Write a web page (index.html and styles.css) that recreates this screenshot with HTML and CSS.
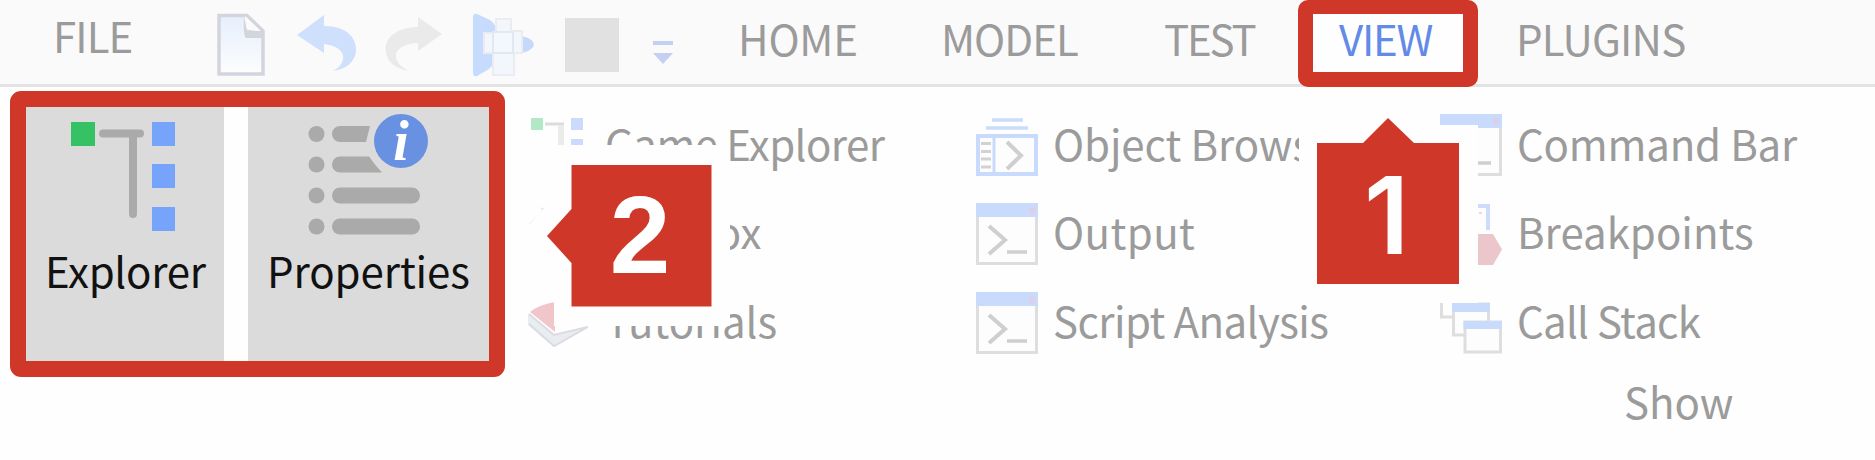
FILE: index.html
```html
<!DOCTYPE html>
<html lang="en">
<head>
<meta charset="utf-8">
<title>Ribbon – View</title>
<link rel="stylesheet" href="styles.css">
</head>
<body>
<svg class="defs" width="0" height="0">
  <defs>
    <linearGradient id="paper" x1="0" y1="0" x2="0" y2="1"><stop offset="0" stop-color="#e6effc"/><stop offset="1" stop-color="#fdfdfe"/></linearGradient>
    <symbol id="console" viewBox="0 0 62 62">
      <rect x="1.5" y="1.5" width="59" height="59" fill="#fdfdfd" stroke="#dedede" stroke-width="3"/>
      <rect width="62" height="14" fill="#c9dbfd"/>
      <rect x="53" y="4" width="6" height="7" fill="#dccfe8"/>
      <path d="M13 23 29 37 13 51" fill="none" stroke="#cfcfcf" stroke-width="4"/>
      <path d="M31 49H51" stroke="#cfcfcf" stroke-width="3.5"/>
    </symbol>
  </defs>
</svg>
<header class="tabs">
  <span class="tab file">FILE</span>
  <svg class="tool" viewBox="0 0 62 84">
    <path d="M4 15.500H32L48 31V74H4Z" fill="url(#paper)" stroke="#d3d4de" stroke-width="3.500"/>
    <path d="M30 16V32H47Z" fill="#fafafa"/><path d="M29 16 32 30 48 31V38H31Q28 36 29 16" fill="#d3d5da"/><path d="M31 18 45 31Q34 31 31 27Z" fill="#fafafa"/>
  </svg>
  <svg class="tool" viewBox="0 0 62 84"><path d="M2 35 29 15V26C52 26 62 38 61 52C59 63 51 69 38 71C52 64 54 47 29 44V53Z" fill="#cfe0fd"/></svg>
  <svg class="tool" viewBox="0 0 62 84"><path d="M58 34 34 17V27C10 28 0 39 2 52C3 62 12 69 25 71C5 61 8 44 34 43V51Z" fill="#eaeaea"/></svg>
  <svg class="tool" viewBox="0 0 62 84">
    <path d="M1 16Q2 13 5 14L18 20Q25 25 25 35V55Q21 66 17 69L5 76Q1 77 1 73Z" fill="#c6dbfd"/>
    <path d="M50 36Q62 39 62 45Q61 50 50 53Z" fill="#c6d9fb"/>
    <path d="M24 19H39V31H50V53H42V75H21V53H12V33H24Z" fill="#f3f6fa" stroke="#e9edf2" stroke-width="2"/>
    <path d="M21 32H41V53H21Z" fill="#f4f7fb" stroke="#e0e8f2" stroke-width="2"/>
  </svg>
  <svg class="tool" viewBox="0 0 62 84"><rect x="1" y="18" width="54" height="54" fill="#e1e1e1"/></svg>
  <svg class="tool" viewBox="0 0 62 84"><path d="M2 41H22V45H2ZM2 53H22L12 64Z" fill="#c3d0f4"/></svg>
  <span class="tab t-home">HOME</span>
  <span class="tab t-model">MODEL</span>
  <span class="tab t-test">TEST</span>
  <span class="tab active">VIEW</span>
  <span class="tab t-plugins">PLUGINS</span>
</header>
<main class="ribbon">
  <section class="large">
    <div class="big explorer">
      <svg class="bigicon" viewBox="0 0 198 140">
        <path d="M77 27.500H114M107 27.500V108" fill="none" stroke="#aaa" stroke-width="8" stroke-linecap="round"/>
        <rect x="45" y="16" width="24" height="24" fill="#34c264"/>
        <path d="M126 16h23v24h-23zM126 58h23v24h-23zM126 101h23v24h-23z" fill="#76a4fb"/>
      </svg>
      <span class="biglabel l-explorer">Explorer</span>
    </div>
    <div class="big properties">
      <svg class="bigicon" viewBox="0 0 241 140">
        <g fill="#aaa">
          <circle cx="68.500" cy="28" r="8"/><circle cx="68.500" cy="58.500" r="8"/><circle cx="68.500" cy="89.500" r="8"/><circle cx="68.500" cy="120.500" r="8"/>
          <path d="M92 20H122L118 36H92A8 8 0 0 1 92 20M92 50.500H121Q126 58 134 66.500H92A8 8 0 0 1 92 50.500"/>
          <rect x="84" y="81.500" width="88" height="16" rx="8"/><rect x="84" y="112.500" width="88" height="16" rx="8"/>
        </g>
        <circle cx="153" cy="35" r="27" fill="#6991e2"/>
        <text class="info" x="153" y="54" text-anchor="middle">i</text>
      </svg>
      <span class="biglabel l-properties">Properties</span>
    </div>
  </section>
  <section class="list c1">
    <div class="item">
      <svg class="icon" viewBox="0 0 62 62"><path d="M17 10H36" stroke="#dcdcdc" stroke-width="3"/><path d="M33 11V60" stroke="#ebebeb" stroke-width="6"/><rect x="3" y="4" width="12" height="12" fill="#b2e8c6"/><path d="M43 4h12v12h-12zM43 25h12v12h-12z" fill="#cadbfd"/></svg>
      <span class="label l-game">Game Explorer</span>
    </div>
    <div class="item">
      <svg class="icon" viewBox="0 0 62 62"><path d="M1 22 17 7M4 21 16 9M13 5 18 8" fill="none" stroke="#e3e8ef" stroke-width="2"/></svg>
      <span class="label l-toolbox">Toolbox</span>
    </div>
    <div class="item">
      <svg class="icon" viewBox="0 0 62 62"><path d="M0 22 26 42 60 34V36L26 55 0 33Z" fill="#e8edf2"/><path d="M1 22 26 43 60 35M1 32 26 54 58 36" fill="none" stroke="#dddbe1" stroke-width="2"/><path d="M2 20Q10 13 27 10V40Z" fill="#f1c6ca"/></svg>
      <span class="label l-tutorials">Tutorials</span>
    </div>
  </section>
  <section class="list c2">
    <div class="item">
      <svg class="icon" viewBox="0 0 62 62"><path d="M16 6H47M10 14H52" stroke="#cadcfd" stroke-width="3.500"/><rect x="2" y="22" width="58" height="38" fill="#fdfdfd" stroke="#c9dbfd" stroke-width="4"/><path d="M18 22V60" stroke="#c9dbfd" stroke-width="3"/><path d="M5 29.500H15M5 37.500H15M5 45H15M5 53H15" stroke="#d2d2d2" stroke-width="3"/><path d="M31 28 45 41.500 31 55" fill="none" stroke="#cfcfcf" stroke-width="4"/></svg>
      <span class="label l-object">Object Browser</span>
    </div>
    <div class="item"><svg class="icon"><use href="#console"/></svg><span class="label l-output">Output</span></div>
    <div class="item"><svg class="icon"><use href="#console"/></svg><span class="label l-script">Script Analysis</span></div>
  </section>
  <section class="list c3">
    <div class="item"><svg class="icon"><use href="#console"/></svg><span class="label l-command">Command Bar</span></div>
    <div class="item">
      <svg class="icon" viewBox="0 0 62 62"><path d="M12 3H48V27" fill="none" stroke="#cddcfd" stroke-width="4"/><path d="M39 10H42" stroke="#ecd8de" stroke-width="2"/><path d="M26 31H53L62 46.500 53 62H26Z" fill="#ebc6ca"/></svg>
      <span class="label l-break">Breakpoints</span>
    </div>
    <div class="item">
      <svg class="icon" viewBox="0 0 62 62"><path d="M1.500 5V25H13M36 5V14" fill="none" stroke="#dedede" stroke-width="3"/><rect x="13.500" y="12" width="35" height="31" fill="#fdfdfd" stroke="#dedede" stroke-width="3"/><path d="M12 11H50V20H12Z" fill="#c9dbfd"/><rect x="25" y="30" width="35.500" height="30" fill="#fdfdfd" stroke="#dedede" stroke-width="3"/><path d="M23.500 29H62V37H23.500Z" fill="#c9dbfd"/></svg>
      <span class="label l-call">Call Stack</span>
    </div>
  </section>
  <span class="label group">Show</span>
</main>
<div class="frame frame-large"></div>
<div class="frame frame-tab"></div>
<svg class="callout callout-two" viewBox="0 0 220 190">
  <path d="M44 5H220V186H44V134L8 96 44 58Z" fill="#fefefe"/>
  <path d="M61.500 25H201.500V166.500H61.500V123L37 96 61.500 69Z" fill="#cf3829"/>
  <text class="digit" x="130" y="133" text-anchor="middle">2</text>
</svg>
<svg class="callout callout-one" viewBox="0 0 190 210">
  <path d="M5 32H62L95 0 128 32H184V210H5Z" fill="#fefefe"/>
  <path d="M23 50H69L94 25 120 50H165V191H23Z" fill="#cf3829"/>
  <text class="digit one" x="92.500" y="160.500" text-anchor="middle">1</text>
</svg>
</body>
</html>
```
FILE: styles.css
```css
* { box-sizing: border-box; }
body {
  position: relative;
  margin: 0;
  width: 1875px;
  height: 460px;
  overflow: hidden;
  background: #fefefe;
  color: #9b9b9b;
  font-family: "Noto Sans CJK SC", "Noto Sans", sans-serif;
  font-size: 42px;
  line-height: 60px;
  white-space: nowrap;
}
svg { display: block; }
.defs { position: absolute; }
.tabs {
  display: grid;
  grid-template-columns: 162px 80px 89px 88px 92px 87px 87px 203px 223px 175px 177px 300px;
  height: 87px;
  padding-left: 53px;
  background: #fafafa;
  border-bottom: 3px solid #e3e3e3;
}
.tab { padding-top: 8px; }
.file { padding-top: 5px; letter-spacing: -0.9px; }
.t-home { letter-spacing: -0.2px; }
.t-model { letter-spacing: -1px; }
.t-test { letter-spacing: -2.2px; }
.active { position: relative; z-index: 1; color: #628ae8; letter-spacing: -1.2px; }
.t-plugins { letter-spacing: -0.8px; }
.tool { width: 62px; height: 84px; }
.ribbon {
  display: grid;
  grid-template-columns: 463px 450px 464px 400px;
  grid-template-rows: 266px 60px;
  padding: 19px 0 0 26px;
}
.large { display: flex; gap: 24px; height: 255px; color: #111; }
.big { display: flex; flex-direction: column; height: 255px; background: #dbdbdb; }
.explorer { width: 198px; }
.properties { width: 241px; }
.bigicon { width: 100%; height: 140px; }
.biglabel { padding-left: 19px; margin-top: -6px; letter-spacing: -0.3px; }
.l-properties { letter-spacing: -0.1px; }
.list { display: flex; flex-direction: column; padding-top: 8px; }
.c1 { padding-left: 39px; }
.c2 { padding-left: 37px; }
.c3 { padding-left: 37px; }
.item { display: flex; flex: none; height: 88.8px; gap: 15px; }
.icon { width: 62px; height: 62px; flex: none; }
.item .label { margin-top: -1.5px; }
.l-game, .l-script { letter-spacing: -0.6px; }
.l-object { letter-spacing: -0.1px; }
.l-output { letter-spacing: 0.4px; }
.l-command { letter-spacing: -0.2px; }
.l-call { letter-spacing: -0.75px; }
.group { grid-column: 4; padding-left: 221px; margin-top: -1px; }
.info { font: italic bold 56px "Liberation Serif", serif; fill: #fff; }
.frame { position: absolute; border: solid #cf3829; }
.frame-large { left: 10px; top: 91px; width: 495px; height: 286px; border-width: 16px; border-radius: 11px; }
.frame-tab { left: 1298px; top: 0; width: 180px; height: 87px; border-width: 14px 15px 15px 15px; border-radius: 10px; background: #fefefe; }
.callout { position: absolute; }
.callout-two { left: 510px; top: 140px; width: 220px; height: 190px; }
.callout-one { left: 1294px; top: 93px; width: 190px; height: 210px; }
.digit { font: bold 109px "Liberation Sans", sans-serif; fill: #fff; }
.digit.one { font: 600 107px Inter, sans-serif; }
```
